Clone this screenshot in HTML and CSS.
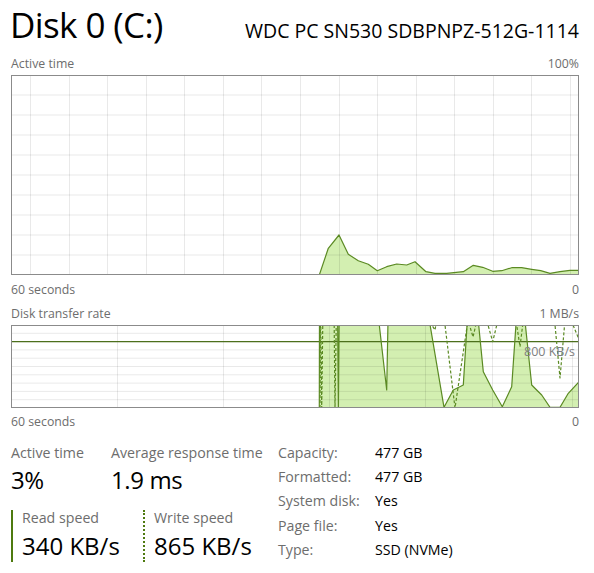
FILE: index.html
```html
<!DOCTYPE html>
<html>
	<head>
		<meta charset="UTF-8">
		<title>Disk 0 (C:)</title>
		<link rel="stylesheet" href="styles.css">
	</head>

	<body>
		<main class="panel">
			<header class="head">
				<h1 class="title">Disk 0 (C:)</h1>
				<span class="model">WDC PC SN530 SDBPNPZ-512G-1114</span>
			</header>

			<div class="axis axis-top">
				<span>Active time</span>
				<span>100%</span>
			</div>
			<svg class="chart" width="568" height="200" viewBox="0 0 568 200">
				<defs>
					<clipPath id="clip-active"><rect x="1" y="1" width="566" height="198"/></clipPath>
				</defs>
				<g clip-path="url(#clip-active)">
					<polygon class="fill" points="308.3,200 317.3,173.3 328,160 337.3,179.3 347.3,185.7 357.3,189.3 366.3,195.7 375.7,191.7 385.7,189 395.7,190 404,186.7 415,196.7 424,198.3 435.7,198.3 452.3,196.7 462.3,190.3 471.7,192.3 481.7,196.3 490.7,195.7 500.7,192.7 510.7,192.7 520.7,194.3 529.7,195.7 539,198.3 549,196.7 559,195.3 568,195.3 568,200"/>
					<g class="grid" id="grid-active"></g>
					<polyline class="line" points="308.3,200 317.3,173.3 328,160 337.3,179.3 347.3,185.7 357.3,189.3 366.3,195.7 375.7,191.7 385.7,189 395.7,190 404,186.7 415,196.7 424,198.3 435.7,198.3 452.3,196.7 462.3,190.3 471.7,192.3 481.7,196.3 490.7,195.7 500.7,192.7 510.7,192.7 520.7,194.3 529.7,195.7 539,198.3 549,196.7 559,195.3 568,195.3"/>
				</g>
				<rect class="frame" x="0.5" y="0.5" width="567" height="199"/>
			</svg>
			<div class="axis axis-under">
				<span>60 seconds</span>
				<span>0</span>
			</div>

			<div class="axis axis-gap">
				<span>Disk transfer rate</span>
				<span>1 MB/s</span>
			</div>
			<div class="chart-box">
				<svg class="chart" width="568" height="83" viewBox="0 0 568 83">
					<defs>
						<clipPath id="clip-rate"><rect x="1" y="1" width="566" height="81"/></clipPath>
					</defs>
					<g clip-path="url(#clip-rate)">
						<polygon class="fill" points="308.3,83 308.5,-20 366,-20 375.7,65 377.3,-20 415.7,-20 433,82.3 442.3,65 452.3,60 457.3,-20 465.7,-20 472.3,46.7 481.7,65 491.3,81.7 500.7,61.7 506.3,-20 512.3,-20 520.7,60 530.7,70 539,82.3 549,82.3 557.3,68.3 568,56.7 568,83"/>
						<g class="grid" id="grid-rate"></g>
						<line class="mark" x1="0" y1="16.7" x2="568" y2="16.7"/>
						<polyline class="line" points="308.3,83 308.5,-20 326.5,-20 327.4,83 328.3,-20 366,-20 375.7,65 377.3,-20 415.7,-20 433,82.3 442.3,65 452.3,60 457.3,-20 465.7,-20 472.3,46.7 481.7,65 491.3,81.7 500.7,61.7 506.3,-20 512.3,-20 520.7,60 530.7,70 539,82.3 549,82.3 557.3,68.3 568,56.7"/>
						<polyline class="line dash" points="309,83 309.5,-20 310.7,83 312,-20 323,-20 324,83 325.5,-20 420.7,0 424,5 425.7,-5 434,0 444,83 457,-5 462,12 466,-5 477,0 481.7,16.7 487,-5 505.7,0 509,21.7 512.3,-5 544,0 549,53 554,-5 562,0 567,12 570,8"/>
					</g>
					<rect class="frame" x="0.5" y="0.5" width="567" height="82"/>
				</svg>
				<span class="mark-label">800 KB/s</span>
			</div>
			<div class="axis axis-last">
				<span>60 seconds</span>
				<span>0</span>
			</div>

			<section class="details">
				<div class="stats">
					<div class="stat-row">
						<div class="stat stat-active">
							<div class="stat-name">Active time</div>
							<div class="stat-value">3%</div>
						</div>
						<div class="stat">
							<div class="stat-name">Average response time</div>
							<div class="stat-value">1.9 ms</div>
						</div>
					</div>
					<div class="stat-row speeds">
						<div class="speed speed-read">
							<div class="stat-name">Read speed</div>
							<div class="speed-value">340 KB/s</div>
						</div>
						<div class="speed speed-write">
							<div class="stat-name">Write speed</div>
							<div class="speed-value">865 KB/s</div>
						</div>
					</div>
				</div>

				<dl class="props">
					<dt>Capacity:</dt><dd>477 GB</dd>
					<dt>Formatted:</dt><dd>477 GB</dd>
					<dt>System disk:</dt><dd>Yes</dd>
					<dt>Page file:</dt><dd>Yes</dd>
					<dt>Type:</dt><dd>SSD (NVMe)</dd>
				</dl>
			</section>
		</main>

		<script>

function drawGrid(id, width, height, xs, rows) {
    const g = document.getElementById(id);
    const ns = "http://www.w3.org/2000/svg";

    xs.forEach(function (x) {
        const l = document.createElementNS(ns, "line");
        l.setAttribute("x1", x); l.setAttribute("x2", x);
        l.setAttribute("y1", 0); l.setAttribute("y2", height);
        g.appendChild(l);
    });

    for (let i = 1; i < rows; i++) {
        const y = (height / rows * i).toFixed(1);
        const l = document.createElementNS(ns, "line");
        l.setAttribute("x1", 0); l.setAttribute("x2", width);
        l.setAttribute("y1", y); l.setAttribute("y2", y);
        g.appendChild(l);
    }
}

const activeCols = [];
for (let k = 0; k < 15; k++) activeCols.push(19.5 + Math.round(k * 38.57));

drawGrid("grid-active", 568, 200, activeCols, 10);
drawGrid("grid-rate", 568, 83, [106.5, 212.5, 318.5, 414.5, 481.5, 561.5], 10);

		</script>
	</body>
</html>
```

FILE: styles.css
```css
body {
    margin: 0;
    background: #ffffff;
    font-family: "Open Sans", "Noto Sans", sans-serif;
    color: #000000;
}

.panel {
    width: 568px;
    padding: 0 15px 0 11px;
}

.head {
    display: flex; justify-content: space-between; align-items: baseline;
    height: 51px;
    padding-top: 5px;
}

.title {
    margin: 0;
    font-size: 35px;
    font-weight: normal;
    line-height: 40px;
    letter-spacing: -0.6px;
    margin-left: -1px;
}

.model {
    font-size: 19.5px;
}

.axis {
    display: flex; justify-content: space-between;
    font-size: 12.3px;
    line-height: 16px;
    color: #6d6d6d;
}

.axis-top {
    margin-bottom: 3px;
}

.axis-under {
    margin-top: 7px;
}

.axis-gap {
    margin-top: 8px;
    margin-bottom: 3px;
}

.axis-last {
    margin-top: 6px;
}

.chart {
    display: block;
}

.chart .frame {
    fill: none;
    stroke: #8b8b8b;
    stroke-width: 1;
}

.chart .grid line {
    stroke: rgba(0, 0, 0, 0.085);
    stroke-width: 1;
}

.chart .fill {
    fill: #d3efb1;
}

.chart .line {
    fill: none;
    stroke: #5b8a23;
    stroke-width: 1.2;
    stroke-linejoin: round;
}

.chart .dash {
    stroke-dasharray: 3 2;
}

.chart .mark {
    stroke: #4c6f1c;
    stroke-width: 1.3;
}

.chart-box {
    position: relative;
}

.mark-label {
    position: absolute; right: 4px; top: 19px;
    font-size: 12.5px;
    line-height: 16px;
    color: #808080;
}

.details {
    display: flex;
    margin-top: 11px;
}

.stats {
    width: 267px;
}

.stat-row {
    display: flex;
}

.stat-active {
    width: 100px;
}

.stat-name {
    font-size: 14.2px;
    line-height: 24px;
    color: #6d6d6d;
    white-space: nowrap;
}

.stat-value {
    font-size: 24px;
    line-height: 30px;
    letter-spacing: -0.4px;
}

.speeds {
    margin-top: 15px;
}

.speed {
    padding-left: 9px;
}

.speed .stat-name {
    line-height: 16px;
}

.speed-value {
    font-size: 24px;
    line-height: 32px;
    margin-top: 4px;
    white-space: nowrap;
}

.speed-read {
    width: 121px;
    border-left: 2px solid #4e7a0f;
}

.speed-write {
    border-left: 2px dotted #4e7a0f;
}

.props {
    display: grid;
    grid-template-columns: 97px auto;
    margin: 0;
    font-size: 14.2px;
    line-height: 23.75px;
}

.props dt {
    color: #6d6d6d;
}

.props dd {
    margin: 0;
}
```
